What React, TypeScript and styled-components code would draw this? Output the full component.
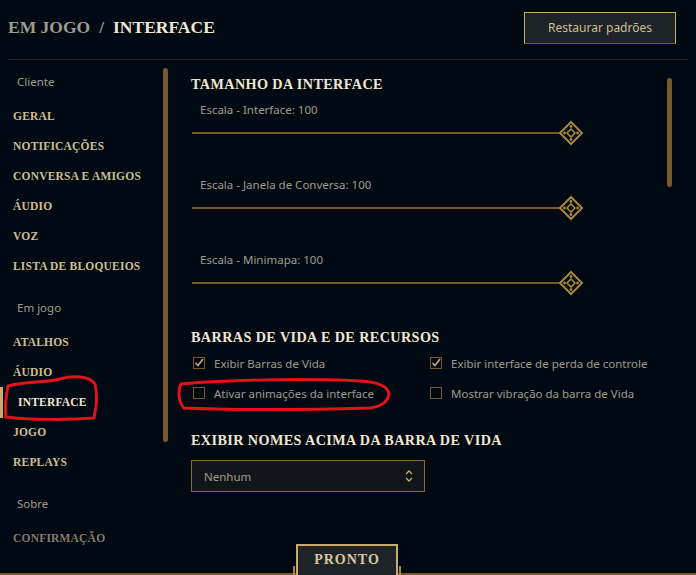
import React from "react";
import styled, { createGlobalStyle } from "styled-components";

const Global = createGlobalStyle`
  html, body { margin: 0; padding: 0; background: #010a13; }
  * { box-sizing: border-box; }
`;

const SERIF = `"Liberation Serif", "Times New Roman", serif`;
const SANS = `"Noto Sans", "Open Sans", Arial, sans-serif`;

const Root = styled.div`
  position: relative;
  width: 696px;
  height: 575px;
  overflow: hidden;
  background: #010a13;
  display: flex;
  flex-direction: column;
  font-family: ${SANS};
`;

const Header = styled.header`
  height: 60px;
  margin: 0 8px;
  border-bottom: 1px solid #1e2328;
  display: flex;
  align-items: center;
  justify-content: space-between;
  padding-bottom: 4px;
`;

const Crumbs = styled.div`
  font-family: ${SERIF};
  font-weight: bold;
  font-size: 17.5px;
  display: flex;
  align-items: center;
`;

const Crumb = styled.span<{ $active?: boolean }>`
  color: ${(p) => (p.$active ? "#f0e6d2" : "#a09b8c")};
`;

const Slash = styled.span`
  color: #a09b8c;
  margin: 0 9px;
`;

const GoldButton = styled.button`
  width: 152px;
  height: 32px;
  margin-right: 12px;
  background: #1e2328;
  border: 1px solid #c8aa6e;
  border-bottom-color: #785a28;
  color: #cdbe91;
  font-family: ${SANS};
  font-size: 12px;
  padding: 0;
`;

const Body = styled.div`
  flex: 1;
  display: flex;
  min-height: 0;
`;

const Sidebar = styled.nav`
  position: relative;
  width: 170px;
  flex-shrink: 0;
  display: flex;
  flex-direction: column;
`;

const Thumb = styled.div<{ $top: number; $height: number; $left: number }>`
  position: absolute;
  left: ${(p) => p.$left}px;
  top: ${(p) => p.$top}px;
  width: 5px;
  height: ${(p) => p.$height}px;
  border-radius: 3px;
  background: #785a28;
`;

const GroupLabel = styled.div<{ $first?: boolean }>`
  padding: ${(p) => (p.$first ? 15 : 20)}px 0 12px 17px;
  line-height: 14px;
  font-size: 11.5px;
  color: #a09b8c;
`;

const NavItem = styled.div<{ $active?: boolean; $dim?: boolean }>`
  position: relative;
  height: 30px;
  display: flex;
  align-items: center;
  padding-left: ${(p) => (p.$active ? 18 : 13)}px;
  font-family: ${SERIF};
  font-weight: bold;
  font-size: 11.5px;
  letter-spacing: 0.2px;
  color: ${(p) => (p.$active ? "#f0e6d2" : p.$dim ? "#837b68" : "#cdbe91")};
  &::before {
    content: "";
    display: ${(p) => (p.$active ? "block" : "none")};
    position: absolute;
    left: 0;
    top: 0;
    width: 3px;
    height: 31px;
    background: #c8aa6e;
  }
`;

const Main = styled.main`
  position: relative;
  flex: 1;
  padding: 15px 0 0 21px;
  display: flex;
  flex-direction: column;
`;

const SectionTitle = styled.h2<{ $gap: number }>`
  margin: ${(p) => p.$gap}px 0 0 0;
  font-family: ${SERIF};
  font-weight: bold;
  font-size: 14.2px;
  line-height: 18px;
  letter-spacing: 0.4px;
  color: #f0e6d2;
`;

const SliderBlock = styled.div<{ $first?: boolean }>`
  margin-top: ${(p) => (p.$first ? 9 : 32)}px;
  display: flex;
  flex-direction: column;
`;

const SliderLabel = styled.div`
  padding-left: 9px;
  line-height: 16px;
  font-size: 11.5px;
  color: #a09b8c;
`;

const SliderRow = styled.div`
  margin-top: 3px;
  height: 24px;
  width: 393px;
  display: flex;
  align-items: center;
`;

const Track = styled.div`
  flex: 1;
  height: 2px;
  margin-left: 1px;
  background: #785a28;
`;

const Handle = () => (
  <svg width="26" height="26" viewBox="0 0 26 26" style={{ marginLeft: -2 }}>
    <polygon points="13,2 24,13 13,24 2,13" fill="#010a13" stroke="#a9843f" strokeWidth="2" />
    <polygon points="13,9 17,13 13,17 9,13" fill="none" stroke="#a9843f" strokeWidth="1.6" />
    <circle cx="13" cy="6.5" r="1.4" fill="#a9843f" />
    <circle cx="13" cy="19.5" r="1.4" fill="#a9843f" />
    <circle cx="6.5" cy="13" r="1.4" fill="#a9843f" />
    <circle cx="19.5" cy="13" r="1.4" fill="#a9843f" />
  </svg>
);

const Slider = ({ label, first }: { label: string; first?: boolean }) => (
  <SliderBlock $first={first}>
    <SliderLabel>{label}</SliderLabel>
    <SliderRow>
      <Track />
      <Handle />
    </SliderRow>
  </SliderBlock>
);

const CheckGrid = styled.div`
  margin-top: 7px;
  padding-left: 2px;
  display: grid;
  grid-template-columns: 237px 1fr;
  row-gap: 10px;
`;

const CheckRow = styled.label`
  height: 20px;
  display: flex;
  align-items: center;
  gap: 9px;
  font-size: 11.5px;
  color: #a09b8c;
`;

const Box = styled.span`
  width: 12px;
  height: 12px;
  border: 1px solid #785a28;
  display: flex;
  align-items: center;
  justify-content: center;
  flex-shrink: 0;
`;

const Check = ({ checked, label }: { checked?: boolean; label: string }) => (
  <CheckRow>
    <Box>
      {checked && (
        <svg width="10" height="10" viewBox="0 0 10 10">
          <polyline points="1.5,5 4,7.5 9,1" fill="none" stroke="#c8aa6e" strokeWidth="1.6" />
        </svg>
      )}
    </Box>
    {label}
  </CheckRow>
);

const Select = styled.div`
  margin-top: 11px;
  width: 234px;
  height: 32px;
  border: 1px solid #8a6b32;
  background: #111519;
  display: flex;
  align-items: center;
  justify-content: space-between;
  padding: 0 10px 0 12px;
  font-size: 11.5px;
  color: #a09b8c;
`;

const Footer = styled.div`
  position: absolute;
  left: 0;
  right: 0;
  bottom: 0;
  height: 31px;
  display: flex;
  justify-content: center;
  padding-right: 2px;
  border-bottom: 2px solid #785a28;
`;

const DoneButton = styled.button`
  position: relative;
  width: 102px;
  height: 33px;
  background: #1e2328;
  border: 2px solid #c8aa6e;
  color: #d6c8a0;
  font-family: ${SERIF};
  font-weight: bold;
  font-size: 14px;
  letter-spacing: 1px;
  padding: 0 0 2px 0;
  &::before, &::after {
    content: "";
    position: absolute;
    bottom: -2px;
    width: 2px;
    height: 11px;
    background: #a9843f;
  }
  &::before { left: -5px; }
  &::after { right: -5px; }
`;

const Annotation = styled.svg`
  position: absolute;
  left: 0;
  top: 0;
  pointer-events: none;
`;

export default function App() {
  return (
    <Root>
      <Global />
      <Header>
        <Crumbs>
          <Crumb>EM JOGO</Crumb>
          <Slash>/</Slash>
          <Crumb $active>INTERFACE</Crumb>
        </Crumbs>
        <GoldButton>Restaurar padrões</GoldButton>
      </Header>
      <Body>
        <Sidebar>
          <Thumb $left={163} $top={8} $height={374} />
          <GroupLabel $first>Cliente</GroupLabel>
          <NavItem>GERAL</NavItem>
          <NavItem>NOTIFICAÇÕES</NavItem>
          <NavItem>CONVERSA E AMIGOS</NavItem>
          <NavItem>ÁUDIO</NavItem>
          <NavItem>VOZ</NavItem>
          <NavItem>LISTA DE BLOQUEIOS</NavItem>
          <GroupLabel>Em jogo</GroupLabel>
          <NavItem>ATALHOS</NavItem>
          <NavItem>ÁUDIO</NavItem>
          <NavItem $active>INTERFACE</NavItem>
          <NavItem>JOGO</NavItem>
          <NavItem>REPLAYS</NavItem>
          <GroupLabel>Sobre</GroupLabel>
          <NavItem $dim>CONFIRMAÇÃO</NavItem>
        </Sidebar>
        <Main>
          <Thumb $left={497} $top={18} $height={109} />
          <SectionTitle $gap={0}>TAMANHO DA INTERFACE</SectionTitle>
          <Slider first label="Escala - Interface: 100" />
          <Slider label="Escala - Janela de Conversa: 100" />
          <Slider label="Escala - Minimapa: 100" />
          <SectionTitle $gap={33}>BARRAS DE VIDA E DE RECURSOS</SectionTitle>
          <CheckGrid>
            <Check checked label="Exibir Barras de Vida" />
            <Check checked label="Exibir interface de perda de controle" />
            <Check label="Ativar animações da interface" />
            <Check label="Mostrar vibração da barra de Vida" />
          </CheckGrid>
          <SectionTitle $gap={28}>EXIBIR NOMES ACIMA DA BARRA DE VIDA</SectionTitle>
          <Select>
            Nenhum
            <svg width="10" height="16" viewBox="0 0 10 16">
              <polyline points="2,6 5,3 8,6" fill="none" stroke="#c8aa6e" strokeWidth="1.3" />
              <polyline points="2,10 5,13 8,10" fill="none" stroke="#c8aa6e" strokeWidth="1.3" />
            </svg>
          </Select>
        </Main>
      </Body>
      <Footer>
        <DoneButton>PRONTO</DoneButton>
      </Footer>
      <Annotation width="696" height="575" viewBox="0 0 696 575">
        <path
          d="M8,386 C6,396 5,408 6,417 C30,420 70,420 94,418 C97,405 97,392 95,384 C90,376 72,375 60,379 C45,383 25,381 8,386"
          fill="none" stroke="#e3121a" strokeWidth="3" strokeLinecap="round"
        />
        <path
          d="M181,384 C230,380 300,378 360,381 C378,382 388,386 389,394 C388,402 380,407 370,408 C300,410 230,410 184,408 C178,402 178,390 181,384"
          fill="none" stroke="#e3121a" strokeWidth="3" strokeLinecap="round"
        />
      </Annotation>
    </Root>
  );
}
